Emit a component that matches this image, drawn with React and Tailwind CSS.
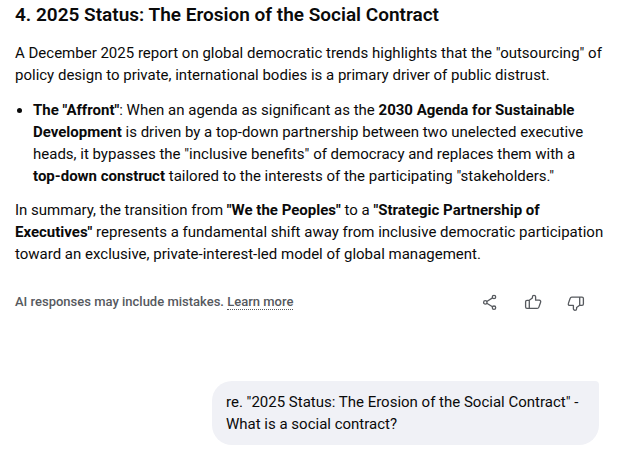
import React from 'react';

const ShareIcon = () => (
  <svg viewBox="0 0 24 24" className="w-6 h-6" fill="none" stroke="currentColor" strokeWidth="1.3" aria-hidden="true">
    <circle cx="7.3" cy="12.4" r="1.7" />
    <circle cx="16" cy="7" r="1.7" />
    <circle cx="16" cy="17.7" r="1.7" />
    <path d="M8.8 11.5 14.5 7.9M8.8 13.3l5.7 3.5" />
  </svg>
);

const ThumbIcon = ({ down }) => (
  <svg viewBox="0 0 24 24" className="w-6 h-6" fill="none" stroke="currentColor" strokeWidth="1.3" strokeLinejoin="round" aria-hidden="true">
    <g transform={down ? 'rotate(180 12 12.8)' : undefined}>
      <path d="M8.3 10.3 11.4 8V6.9a1.6 1.6 0 0 1 3.2 0v3.3h3.6c1.2 0 1.8 1 1.4 2l-1.7 4.9c-.3.9-.8 1.3-1.7 1.3H6c-.8 0-1.4-.6-1.4-1.4v-5.3c0-.8.6-1.4 1.4-1.4h2.3v8.1" />
    </g>
  </svg>
);

const App = () => {
  return (
    <main className="min-h-screen bg-white pl-[15px] pr-4 pt-[3px] pb-[10px] font-[Roboto,'Liberation_Sans',sans-serif] text-[15px] leading-[22px] text-[#0a0a0a]">
      <article>
        <h3 className="text-[19px] leading-6 font-semibold">
          4. 2025 Status: The Erosion of the Social Contract
        </h3>
        <p className="mt-[15px]">
          A December 2025 report on global democratic trends highlights that the "outsourcing" of policy design to private, international bodies is a primary driver of public distrust.
        </p>
        <ul className="mt-[13px] pl-[18px] pr-[10px] list-disc">
          <li>
            <strong className="font-bold">The "Affront"</strong>: When an agenda as significant as the{' '}
            <strong className="font-bold">2030 Agenda for Sustainable Development</strong> is driven by a top-down partnership between two unelected executive heads, it bypasses the "inclusive benefits" of democracy and replaces them with a{' '}
            <strong className="font-bold">top-down construct</strong> tailored to the interests of the participating "stakeholders."
          </li>
        </ul>
        <p className="mt-3">
          In summary, the transition from <strong className="font-bold">"We the Peoples"</strong> to a{' '}
          <strong className="font-bold">"Strategic Partnership of Executives"</strong> represents a fundamental shift away from inclusive democratic participation toward an exclusive, private-interest-led model of global management.
        </p>
      </article>

      <div className="mt-[25px] flex items-center justify-between text-[#56595e]">
        <p className="text-[13px] leading-5 font-medium">
          AI responses may include mistakes.{' '}
          <a href="#learn-more" className="border-b border-dotted border-current">Learn more</a>
        </p>
        <div className="flex gap-[19px] pr-[21px]">
          <button type="button" aria-label="Share"><ShareIcon /></button>
          <button type="button" aria-label="Good response"><ThumbIcon /></button>
          <button type="button" aria-label="Bad response"><ThumbIcon down /></button>
        </div>
      </div>

      <div className="mt-[67px] mr-[10px] flex justify-end">
        <p className="max-w-[387px] rounded-[20px] rounded-tr-[4px] bg-[#f0f1f6] px-[14px] py-[10px]">
          re. "2025 Status: The Erosion of the Social Contract" - What is a social contract?
        </p>
      </div>
    </main>
  );
};

export default App;
